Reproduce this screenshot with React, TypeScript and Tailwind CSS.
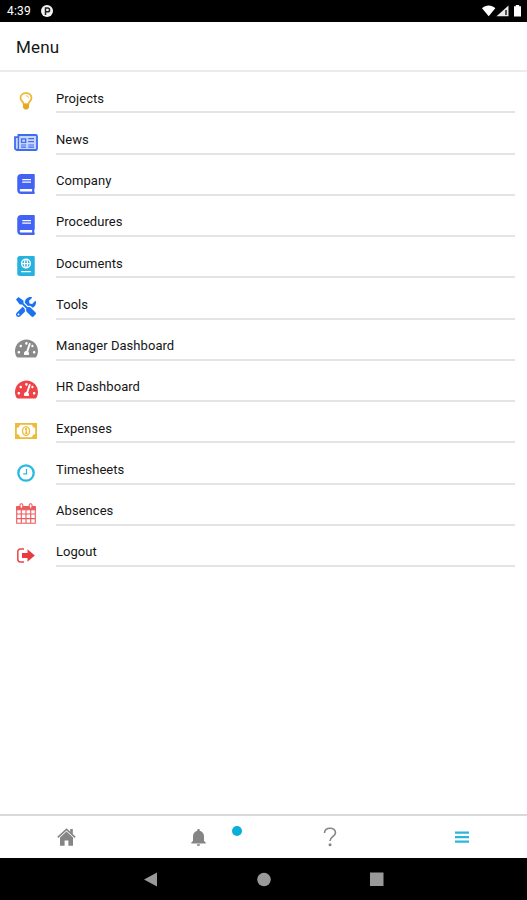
import React from "react";
import { FaBook, FaPassport, FaTachometerAlt, FaTools } from "react-icons/fa";
import { IoMdNotifications } from "react-icons/io";

const BulbIcon = () => (
  <svg width="14" height="18" viewBox="0 0 14 18" fill="none">
    <path
      d="M4.7 12.2C4.5 9.8 1.5 8.6 1.5 5.7 1.5 3 3.9 1.2 7 1.2s5.5 1.8 5.5 4.5c0 2.9-3 4.1-3.2 6.5Z"
      stroke="#edb935"
      strokeWidth="1.8"
    />
    <path d="M7 3.8c1.6 0 2.6.8 2.6 2" stroke="#edb935" strokeWidth="0.9" />
    <path d="M4 12.2h6v3.6L8.2 17.6H5.8L4 15.8Z" fill="#e5a91f" />
  </svg>
);

const NewspaperIcon = () => (
  <svg width="24" height="17" viewBox="0 0 24 17" fill="none" stroke="#3f6cf0">
    <path
      d="M4.4 1h17.3c.8 0 1.3.5 1.3 1.3v12.4c0 .8-.5 1.3-1.3 1.3H3c-1.200 0-2-.8-2-2V3.200h3.400Z"
      fill="#c9d6fc"
      strokeWidth="1.8"
    />
    <path d="M4.400 3v10.500c0 1.500-.6 2.300-1.500 2.300" strokeWidth="1.300" />
    <rect x="7.500" y="5" width="4.200" height="3.400" strokeWidth="1.300" />
    <path d="M7 11h5.200M7 13.200h5.200M14.200 4.700H20M14.200 7.700H20M14.200 11H20M14.200 13.200H20" strokeWidth="1.200" />
  </svg>
);

const BanknoteIcon = () => (
  <svg width="22" height="16" viewBox="0 0 22 16" fill="none">
    <rect x="0.9" y="0.9" width="20.2" height="14.2" stroke="#eebd38" strokeWidth="1.8" />
    <path
      d="M1 1h4a4 4 0 0 1-4 4ZM21 1h-4a4 4 0 0 0 4 4ZM1 15h4a4 4 0 0 0-4-4ZM21 15h-4a4 4 0 0 1 4-4Z"
      fill="#eebd38"
    />
    <ellipse cx="11" cy="8" rx="3.5" ry="4.4" stroke="#eebd38" strokeWidth="1.4" />
    <path d="M10 6.3 11.2 5.5v4.600M9.800 10.300h2.700" stroke="#e5a91f" strokeWidth="1.1" />
  </svg>
);

const ClockIcon = () => (
  <svg width="18" height="18" viewBox="0 0 18 18" fill="none" stroke="#27b9e2">
    <circle cx="9" cy="9" r="7.7" strokeWidth="2.300" />
    <path d="M9.500 5v4.800H6.200" strokeWidth="1.200" />
  </svg>
);

const CalendarIcon = () => (
  <svg width="20" height="21" viewBox="0 0 20 21" fill="none" stroke="#ee5a5c">
    <path d="M.7 4h18.6v16.2H.7ZM.7 11h18.6M.7 15.600h18.6M5.300 7v13M10 7v13M14.700 7v13" strokeWidth="1.100" />
    <path d="M.7 3.500h18.6v3.300H.7Z" fill="#ee5a5c" />
    <rect x="4" y="0.8" width="2.800" height="4.400" rx="1.200" fill="#fff" strokeWidth="1.100" />
    <rect x="13.200" y="0.8" width="2.800" height="4.400" rx="1.200" fill="#fff" strokeWidth="1.100" />
  </svg>
);

const LogoutIcon = () => (
  <svg width="18" height="15" viewBox="0 0 18 15" fill="none">
    <path d="M7 1H3.500A2.700 2.700 0 0 0 .8 3.700v7.600A2.700 2.700 0 0 0 3.500 14H7" stroke="#ee4447" strokeWidth="1.500" />
    <path d="M5 5h5.500V1.200L17.800 7.500l-7.300 6.300V10H5Z" fill="#e63c40" />
  </svg>
);

const HomeIcon = () => (
  <svg width="19" height="18" viewBox="0 0 19 18" fill="none">
    <path d="M.8 9.300 9.500 1.400l8.700 7.900" stroke="currentColor" strokeWidth="1.600" />
    <path d="M13.200 1h2.600v5.200l-2.600-2.300Z" fill="currentColor" />
    <path d="M9.500 3.600 16 9.500v8.300h-4.600v-5.300H7.600v5.300H3V9.500Z" fill="currentColor" />
  </svg>
);

const menuItems = [
  { label: "Projects", icon: <BulbIcon /> },
  { label: "News", icon: <NewspaperIcon /> },
  { label: "Company", icon: <FaBook size={20} className="text-[#4263f3]" /> },
  { label: "Procedures", icon: <FaBook size={20} className="text-[#4263f3]" /> },
  { label: "Documents", icon: <FaPassport size={20} className="text-[#25b2df]" /> },
  { label: "Tools", icon: <FaTools size={20} className="text-[#1b74ee]" /> },
  { label: "Manager Dashboard", icon: <FaTachometerAlt size={23} className="text-[#8a8a8a]" /> },
  { label: "HR Dashboard", icon: <FaTachometerAlt size={23} className="text-[#ee4447]" /> },
  { label: "Expenses", icon: <BanknoteIcon /> },
  { label: "Timesheets", icon: <ClockIcon /> },
  { label: "Absences", icon: <CalendarIcon /> },
  { label: "Logout", icon: <LogoutIcon /> },
];

const StatusBar = () => (
  <div className="flex h-[22px] shrink-0 items-center bg-black pl-[7px] pr-[6px] text-white">
    <span className="text-[12px] leading-none tracking-[0.2px]">4:39</span>
    <svg className="ml-[10px]" width="12" height="12" viewBox="0 0 12 12">
      <circle cx="6" cy="6" r="6" fill="#f4f4f4" />
      <path d="M4.500 10V3h2.200a1.900 1.900 0 0 1 0 3.800H5" fill="none" stroke="#222" strokeWidth="1.500" />
    </svg>
    <svg className="ml-auto" width="39" height="14" viewBox="0 0 39 14">
      <path d="M0 4.200C4 .6 9.400.6 13.300 4.200L6.700 12.200Z" fill="#fff" />
      <path d="M14.500 12.200 26.500 1.500v10.700Z" fill="#e8e8e8" />
      <path d="M23 6h2v5h-2Z" fill="#555" />
      <path d="M32 2.200h1.800V1h3.400v1.200H39v10.300h-7Z" fill="#fff" />
    </svg>
  </div>
);

const TabBar = () => (
  <div className="grid h-[44px] shrink-0 grid-cols-4 border-t-2 border-[#d9d9d9] text-[#858585]">
    <div className="flex items-center justify-center pl-[2px]">
      <HomeIcon />
    </div>
    <div className="relative flex items-center justify-center pl-[2px]">
      <IoMdNotifications size={21} />
      <span className="absolute right-[22px] top-[10px] h-[10px] w-[10px] rounded-full bg-[#0aaedb]" />
    </div>
    <div className="flex items-center justify-center pl-[2px]">
      <svg width="14" height="20" viewBox="0 0 14 20" fill="none">
        <path
          d="M1.500 6C1.500 2.800 4 1.200 7 1.200S12.500 3 12.500 5.800C12.500 9.400 7 9.600 7 14"
          stroke="currentColor"
          strokeWidth="1.600"
        />
        <circle cx="7" cy="17.800" r="1.500" fill="currentColor" />
      </svg>
    </div>
    <div className="flex items-center justify-center pl-[2px]">
      <svg width="14" height="12" viewBox="0 0 14 12" fill="#2fb5d9">
        <path d="M0 .5h14v2.200H0ZM0 5h14v2.200H0ZM0 9.500h14v2.200H0Z" />
      </svg>
    </div>
  </div>
);

const SystemNav = () => (
  <div className="flex h-[42px] shrink-0 items-center justify-center bg-black">
    <svg width="240" height="16" viewBox="0 0 240 16" fill="#999">
      <path d="M0 8.500 13 1.500v14Z" />
      <circle cx="120" cy="8.500" r="6.800" />
      <rect x="226" y="1.500" width="13.500" height="13.500" />
    </svg>
  </div>
);

export default function App() {
  return (
    <div className="flex h-[900px] w-[527px] flex-col overflow-hidden bg-white font-[Roboto,sans-serif] text-[#161616]">
      <StatusBar />
      <header className="flex h-[50px] shrink-0 items-center border-b-2 border-[#ebebeb] pl-4 pt-[3px] text-[17px] tracking-[0.2px]">
        Menu
      </header>
      <main className="flex-1">
        {menuItems.map((item) => (
          <div key={item.label} className="flex h-[41.27px] pr-3">
            <div className="flex w-[56px] shrink-0 items-center justify-center pr-1 pt-[17px]">
              {item.icon}
            </div>
            <div className="flex-1 border-b-2 border-[#e4e4e4] pt-[16.500px] text-[13px] leading-5 tracking-[0.05px]">
              {item.label}
            </div>
          </div>
        ))}
      </main>
      <TabBar />
      <SystemNav />
    </div>
  );
}
